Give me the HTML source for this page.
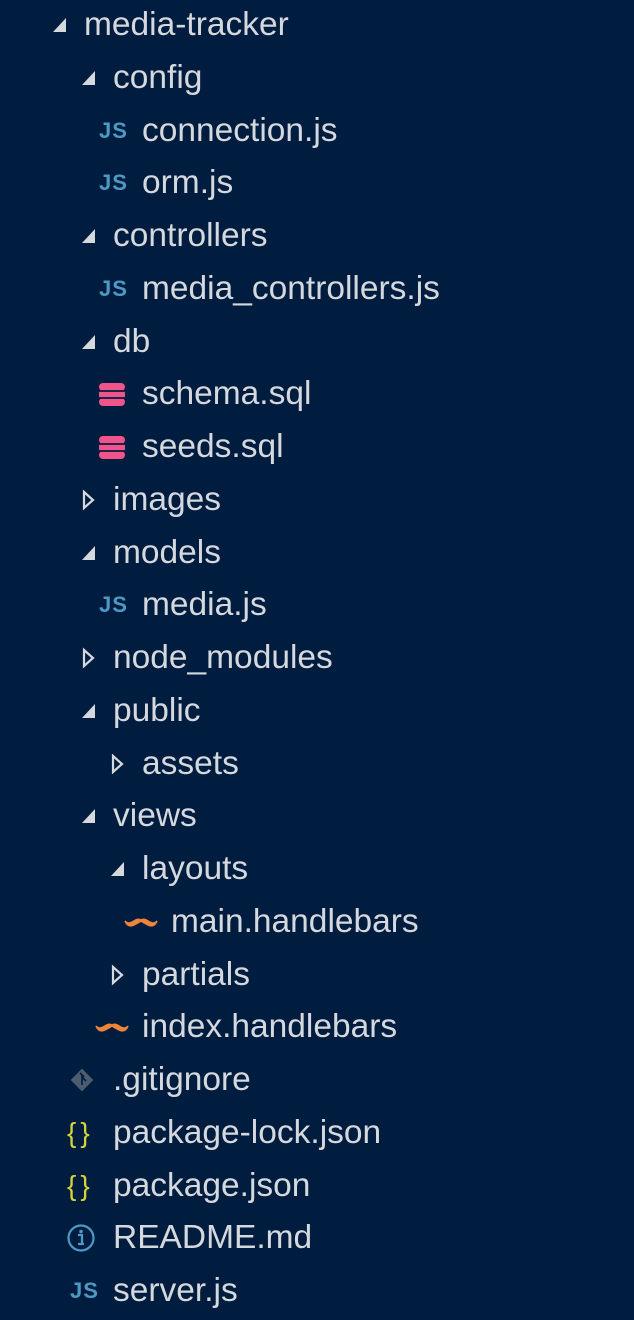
<!DOCTYPE html>
<html><head><meta charset="utf-8"><style>
html,body{margin:0;padding:0;background:#001d40;width:634px;height:1320px;overflow:hidden}
.r{position:absolute;left:0;height:40px;line-height:40px;font-family:"Liberation Sans",sans-serif;font-size:33.5px;color:#d5d8dd;white-space:nowrap}
.r span.t{position:absolute;top:0}
.ic{position:absolute;top:0;height:40px;display:flex;align-items:center}
.js{font-family:"Liberation Sans",sans-serif;font-weight:bold;font-size:22px;color:#4c9ac4;letter-spacing:1px}
</style></head><body>
<div id="c"></div>
<script>
const rows=[
["d",0,"media-tracker",1],["d",1,"config",1],["js",2,"connection.js"],["js",2,"orm.js"],
["d",1,"controllers",1],["js",2,"media_controllers.js"],["d",1,"db",1],["db",2,"schema.sql"],["db",2,"seeds.sql"],
["d",1,"images",0],["d",1,"models",1],["js",2,"media.js"],["d",1,"node_modules",0],["d",1,"public",1],
["d",2,"assets",0],["d",1,"views",1],["d",2,"layouts",1],["hb",3,"main.handlebars"],["d",2,"partials",0],
["hb",2,"index.handlebars"],["git",1,".gitignore"],["json",1,"package-lock.json"],["json",1,"package.json"],
["info",1,"README.md"],["js",1,"server.js"]];
let h="";
rows.forEach((r,i)=>{
 const cy=25+52.75*i, top=cy-20, tx=84+29*r[1];
 let icon="";
 if(r[0]=="d"){
  const ax=tx-32;
  icon = r[3]? `<svg class="ic" style="left:${ax}px" width="16" height="40"><polygon points="14,13 14,27 1,27" fill="#d5d8dd"/></svg>`
   : `<svg class="ic" style="left:${ax+1}px" width="16" height="40"><polygon points="2,12 11,20 2,28" fill="none" stroke="#d5d8dd" stroke-width="2.2"/></svg>`;
 } else if(r[0]=="js"){
  icon=`<span class="ic js" style="left:${tx-43}px">JS</span>`;
 } else if(r[0]=="db"){
  icon=`<svg class="ic" style="left:${tx-44}px" width="28" height="40"><g fill="#f0548a"><rect x="1" y="9" width="26" height="8" rx="4"/><rect x="1" y="17" width="26" height="7" rx="2"/><rect x="1" y="24" width="26" height="8" rx="4"/></g><g stroke="#001d40" stroke-width="1.8"><line x1="0" y1="17" x2="28" y2="17"/><line x1="0" y1="24" x2="28" y2="24"/></g></svg>`;
 } else if(r[0]=="hb"){
  icon=`<svg class="ic" style="left:${tx-47}px" width="34" height="40"><path d="M1 19 Q4 26 10 23 Q14 21 17 19 Q20 21 24 23 Q30 26 33 19 Q30 23 24 19 Q20 16 17 18 Q14 16 10 19 Q4 23 1 19Z" fill="#f0853a" stroke="#f0853a" stroke-width="1.5"/></svg>`;
 } else if(r[0]=="git"){
  icon=`<svg class="ic" style="left:${tx-46}px" width="30" height="40"><rect x="7" y="12" width="16" height="16" transform="rotate(45 15 20)" fill="#4d5c6e"/><path d="M13 13 L17 17 M15 15 L15 25 M15 17 L19 21" stroke="#001d40" stroke-width="1.6" fill="none"/></svg>`;
 } else if(r[0]=="json"){
  icon=`<span class="ic" style="left:${tx-46}px;color:#d5d23a;font-size:28px;font-family:'Liberation Sans',sans-serif;letter-spacing:4px">{}</span>`;
 } else if(r[0]=="info"){
  icon=`<svg class="ic" style="left:${tx-46}px" width="30" height="40"><circle cx="14" cy="20" r="12.5" fill="none" stroke="#4c9ac4" stroke-width="2.2"/><circle cx="14" cy="13.5" r="1.8" fill="#4c9ac4"/><path d="M11 17h4v8M11 26h6" stroke="#4c9ac4" stroke-width="2.2" fill="none"/></svg>`;
 }
 h+=`<div class="r" style="top:${top}px;width:634px">${icon}<span class="t" style="left:${tx}px">${r[2]}</span></div>`;
});
document.getElementById("c").innerHTML=h;
</script>
</body></html>
